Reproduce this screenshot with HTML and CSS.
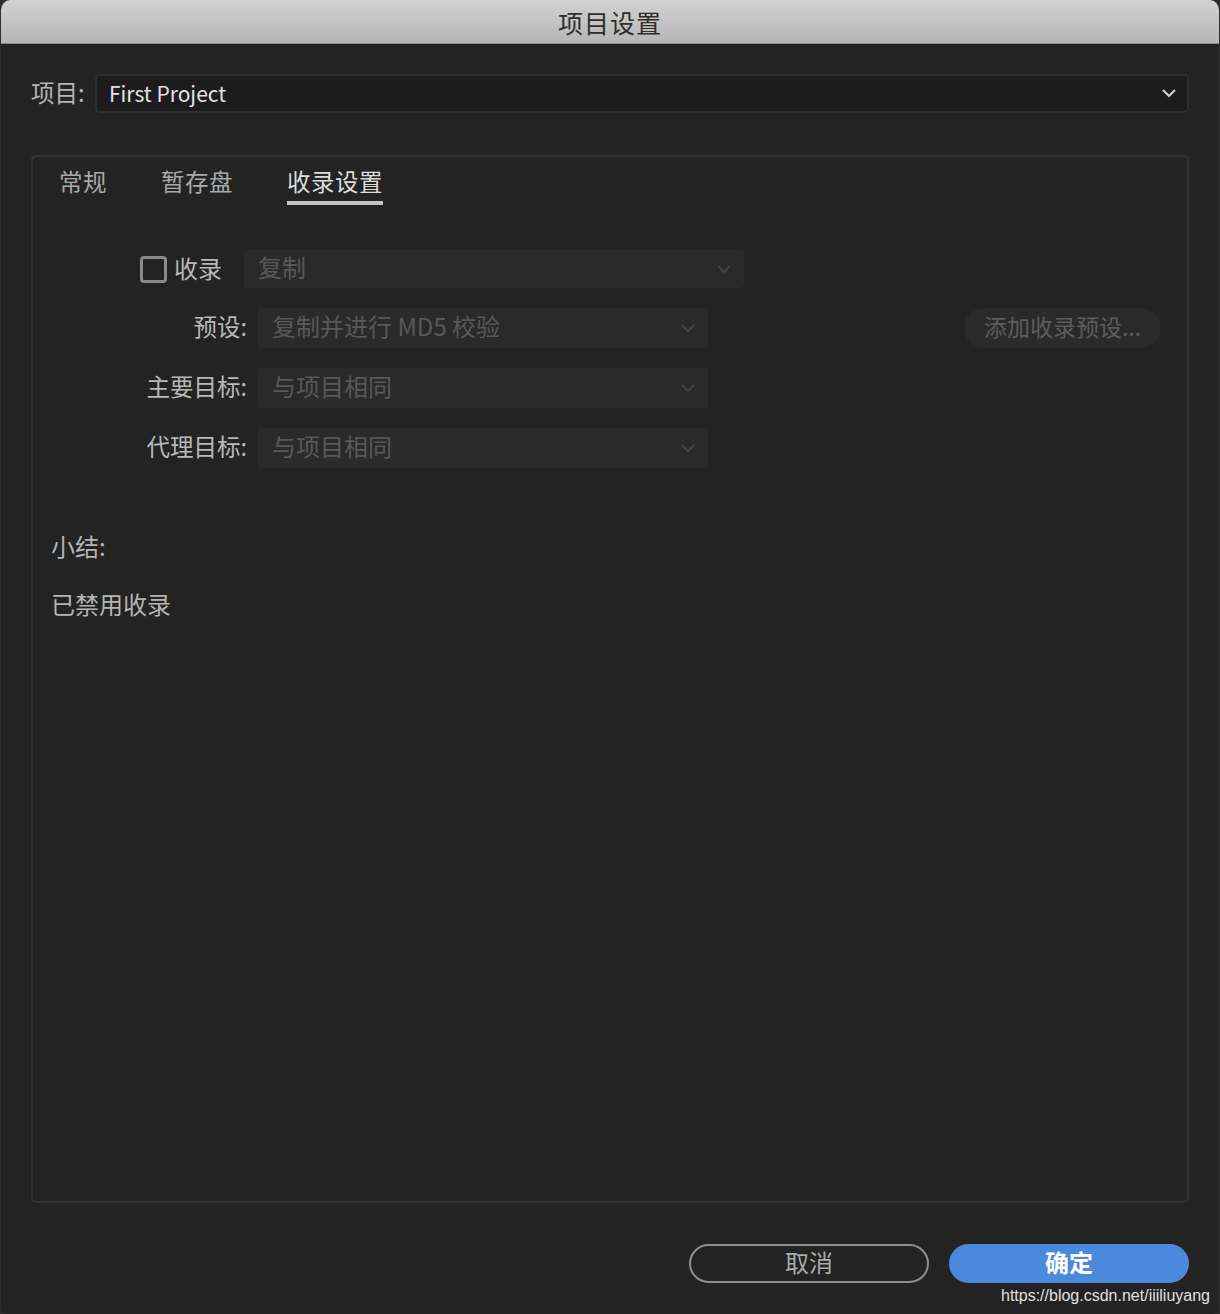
FILE: index.html
```html
<!DOCTYPE html>
<html lang="zh">
<head>
<meta charset="utf-8">
<title>项目设置</title>
<link rel="stylesheet" href="styles.css">
</head>
<body>
<div class="window">
  <div class="titlebar">项目设置</div>
  <div class="content">
    <div class="project-row">
      <span class="project-label">项目:</span>
      <div class="project-select">
        <span>First Project</span>
        <svg class="chev" width="16" height="10" viewBox="0 0 16 10"><path d="M2 2 L8 8 L14 2" fill="none" stroke="#d0d0d0" stroke-width="2"/></svg>
      </div>
    </div>
    <div class="panel">
      <div class="tabs">
        <div class="tab">常规</div>
        <div class="tab">暂存盘</div>
        <div class="tab active">收录设置</div>
      </div>
      <div class="form">
        <div class="row">
          <div class="check-cell">
            <span class="checkbox"></span>
            <span class="check-text">收录</span>
          </div>
          <div class="select wide">
            <span class="sel-text">复制</span>
            <svg class="chev" width="16" height="10" viewBox="0 0 16 10"><path d="M2 2 L8 8 L14 2" fill="none" stroke="#484848" stroke-width="1.6"/></svg>
          </div>
        </div>
        <div class="row">
          <div class="label">预设:</div>
          <div class="select">
            <span class="sel-text">复制并进行 MD5 校验</span>
            <svg class="chev" width="16" height="10" viewBox="0 0 16 10"><path d="M2 2 L8 8 L14 2" fill="none" stroke="#484848" stroke-width="1.6"/></svg>
          </div>
          <div class="add-btn"><span class="sel-text">添加收录预设...</span></div>
        </div>
        <div class="row">
          <div class="label">主要目标:</div>
          <div class="select">
            <span class="sel-text">与项目相同</span>
            <svg class="chev" width="16" height="10" viewBox="0 0 16 10"><path d="M2 2 L8 8 L14 2" fill="none" stroke="#484848" stroke-width="1.6"/></svg>
          </div>
        </div>
        <div class="row">
          <div class="label">代理目标:</div>
          <div class="select">
            <span class="sel-text">与项目相同</span>
            <svg class="chev" width="16" height="10" viewBox="0 0 16 10"><path d="M2 2 L8 8 L14 2" fill="none" stroke="#484848" stroke-width="1.6"/></svg>
          </div>
        </div>
      </div>
      <div class="summary">
        <div class="summary-title">小结:</div>
        <div class="summary-text">已禁用收录</div>
      </div>
    </div>
    <div class="buttons">
      <div class="btn cancel"><span class="btn-text">取消</span></div>
      <div class="btn ok"><span class="btn-text">确定</span></div>
    </div>
  </div>
  <div class="watermark">https://blog.csdn.net/iiiliuyang</div>
</div>
</body>
</html>
```

FILE: styles.css
```css
html, body {
  margin: 0;
  padding: 0;
  background: #2c2c2c;
}
body {
  font-family: "Noto Sans CJK SC", "Noto Sans", sans-serif;
}
.window {
  position: relative;
  width: 1220px;
  height: 1314px;
  background: #232323;
  border-radius: 10px 10px 6px 6px;
  overflow: hidden;
  box-sizing: border-box;
  border-left: 1px solid #2e2e2e;
  border-right: 1px solid #2e2e2e;
}
.titlebar {
  height: 43px;
  background: linear-gradient(#d2d2d2, #b6b6b6);
  border-bottom: 1px solid #8a8a8a;
  text-align: center;
  line-height: 44px;
  font-size: 25px;
  color: #2e2e2e;
  letter-spacing: 1px;
}
.content {
  padding: 30px 30px 0 30px;
}
.project-row {
  display: flex;
  align-items: center;
  height: 39px;
}
.project-label {
  width: 64px;
  font-size: 23.5px;
  color: #b4b4b4;
  line-height: 30px;
  padding-bottom: 3px;
}
.project-select {
  flex: 1;
  height: 39px;
  box-sizing: border-box;
  background: #1c1c1c;
  border: 2px solid #2e2e2e;
  border-radius: 5px;
  display: flex;
  align-items: center;
  justify-content: space-between;
  padding: 0 10px 2px 12px;
  font-size: 21px;
  color: #e2e2e2;
}
.panel {
  margin-top: 42px;
  height: 1048px;
  box-sizing: border-box;
  border: 2px solid #323232;
  border-radius: 5px;
}
.tabs {
  display: flex;
  gap: 54px;
  padding: 9px 0 0 26px;
}
.tab {
  font-size: 23.5px;
  line-height: 30px;
  color: #a8a8a8;
  padding-bottom: 5px;
  border-bottom: 4px solid transparent;
  letter-spacing: 0.5px;
}
.tab.active {
  color: #dcdcdc;
  border-bottom-color: #c4c4c4;
}
.form {
  margin-top: 45px;
  display: flex;
  flex-direction: column;
  gap: 20px;
}
.row {
  display: flex;
  align-items: center;
}
.check-cell {
  width: 211px;
  box-sizing: border-box;
  padding-left: 107px;
  display: flex;
  align-items: center;
  gap: 7px;
}
.checkbox {
  width: 27px;
  height: 27px;
  box-sizing: border-box;
  border: 3px solid #8a8a8a;
  border-radius: 4px;
}
.check-text {
  font-size: 24px;
  color: #b8b8b8;
  line-height: 30px;
  padding-bottom: 3px;
}
.label {
  width: 214px;
  margin-right: 11px;
  text-align: right;
  font-size: 23.5px;
  color: #b8b8b8;
  line-height: 30px;
  padding-bottom: 4px;
}
.select {
  width: 450px;
  height: 40px;
  box-sizing: border-box;
  background: #2a2a2a;
  border-radius: 4px;
  display: flex;
  align-items: center;
  justify-content: space-between;
  padding: 0 12px 0 14px;
  font-size: 24px;
  color: #585858;
}
.sel-text {
  line-height: 30px;
  padding-bottom: 4px;
}
.select.wide {
  width: 500px;
  height: 38px;
}
.add-btn {
  margin-left: auto;
  margin-right: 26px;
  width: 197px;
  height: 40px;
  box-sizing: border-box;
  border-radius: 20px;
  background: #2a2a2a;
  font-size: 23px;
  color: #5c5c5c;
  display: flex;
  align-items: center;
  justify-content: center;
}
.summary {
  padding: 63px 0 0 18px;
}
.summary-title, .summary-text {
  font-size: 24px;
  line-height: 30px;
  color: #b4b4b4;
}
.summary-text {
  margin-top: 28px;
}
.buttons {
  display: flex;
  justify-content: flex-end;
  gap: 20px;
  margin-top: 41px;
}
.btn {
  width: 240px;
  height: 39px;
  box-sizing: border-box;
  border-radius: 20px;
  display: flex;
  align-items: center;
  justify-content: center;
  font-size: 24px;
}
.btn-text {
  line-height: 30px;
  padding-bottom: 4px;
}
.btn.cancel {
  border: 2px solid #8e8e8e;
  color: #aaaaaa;
}
.btn.ok {
  background: #4a89dc;
  color: #ffffff;
  font-weight: bold;
}
.watermark {
  position: absolute;
  right: 9px;
  bottom: 9px;
  font-family: "Liberation Sans", Arial, sans-serif;
  font-size: 16px;
  color: #e0e0e0;
}
```
